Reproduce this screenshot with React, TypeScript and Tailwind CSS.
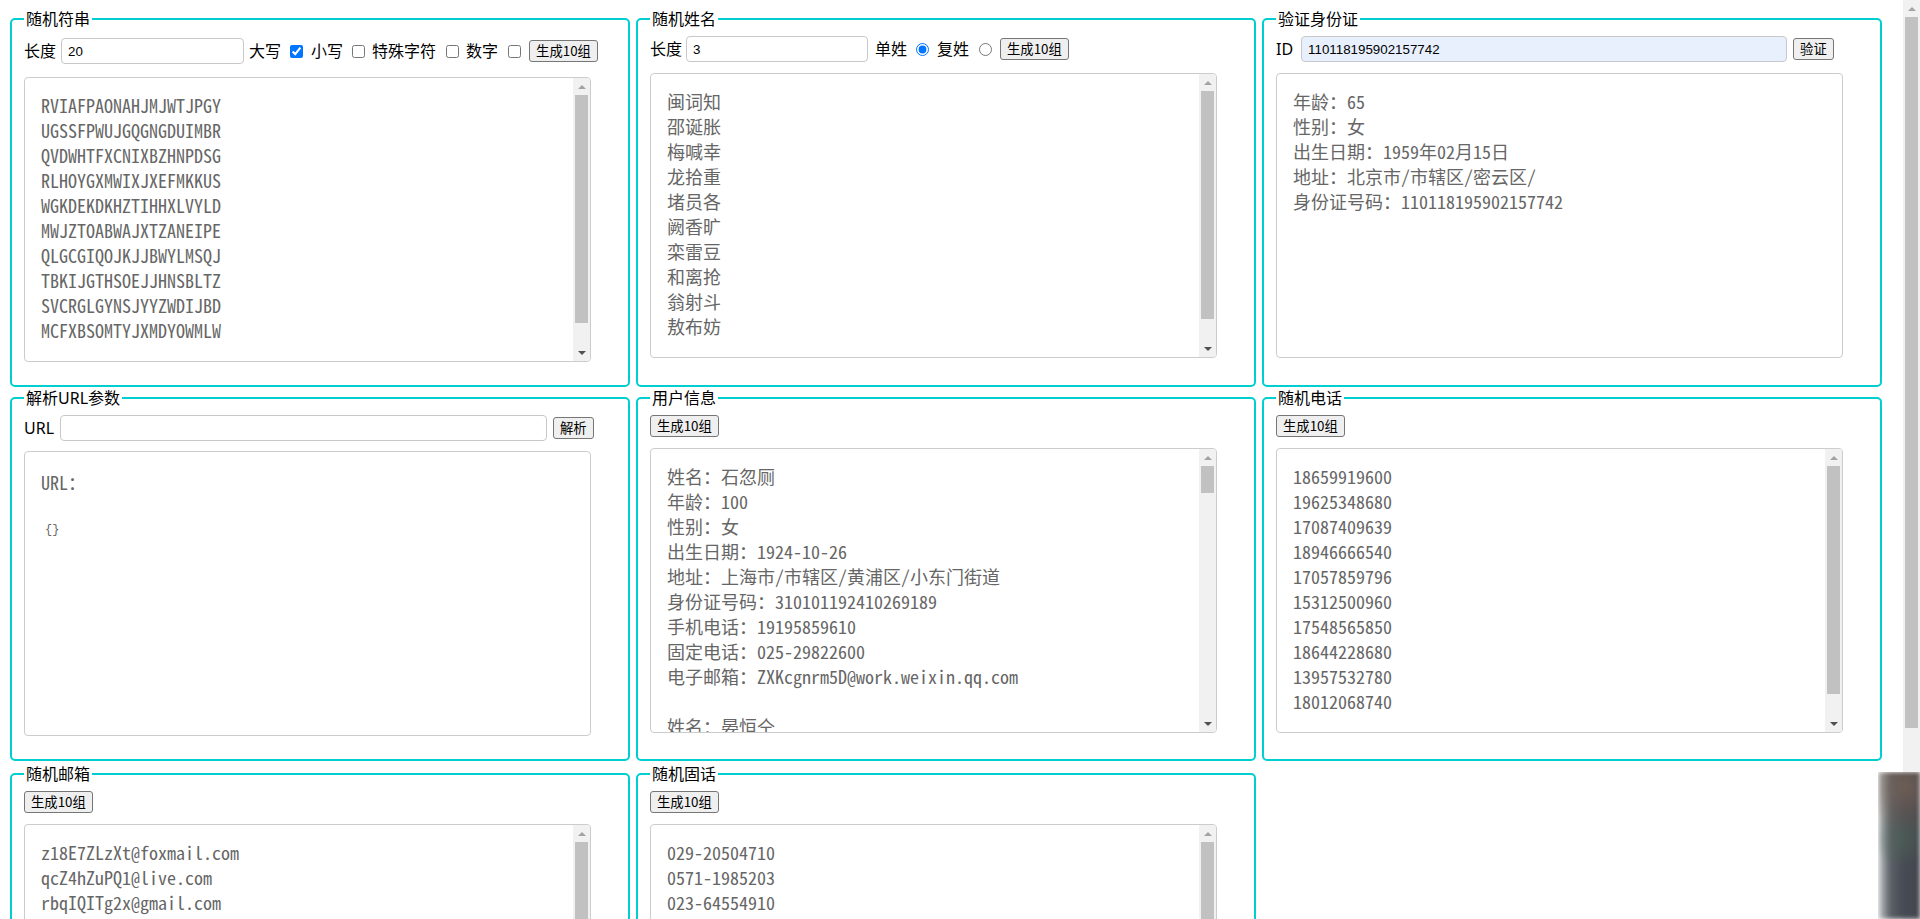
import React from "react";

const ui = "font-['Noto_Sans','Noto_Sans_CJK_SC',sans-serif]";
const btnFont = "font-['Noto_Sans_CJK_SC','Noto_Sans',sans-serif]";
const mono = "font-['Noto_Sans_Mono_CJK_SC','Liberation_Mono',monospace]";

const strings = [
  "RVIAFPAONAHJMJWTJPGY",
  "UGSSFPWUJGQGNGDUIMBR",
  "QVDWHTFXCNIXBZHNPDSG",
  "RLHOYGXMWIXJXEFMKKUS",
  "WGKDEKDKHZTIHHXLVYLD",
  "MWJZTOABWAJXTZANEIPE",
  "QLGCGIQOJKJJBWYLMSQJ",
  "TBKIJGTHSOEJJHNSBLTZ",
  "SVCRGLGYNSJYYZWDIJBD",
  "MCFXBSOMTYJXMDYOWMLW",
];

const names = ["闽词知", "邵诞胀", "梅喊幸", "龙拾重", "堵员各", "阙香旷", "栾雷豆", "和离抢", "翁射斗", "敖布妨"];

const idInfo = [
  "年龄：65",
  "性别：女",
  "出生日期：1959年02月15日",
  "地址：北京市/市辖区/密云区/",
  "身份证号码：110118195902157742",
];

const users = [
  ["石忽厕", "100", "女", "1924-10-26", "上海市/市辖区/黄浦区/小东门街道", "310101192410269189", "19195859610", "025-29822600", "ZXKcgnrm5D@work.weixin.qq.com"],
  ["晏恒仝", "37", "男", "1987-03-14", "浙江省/杭州市/西湖区/北山街道", "330106198703142715", "13857261904", "0571-8826341", "pQ7xLmTz2a@163.com"],
  ["柏淑闻", "52", "女", "1972-08-02", "广东省/广州市/天河区/石牌街道", "440106197208024426", "18620395517", "020-38419025", "Hk3vRw9QsE@qq.com"],
  ["戚岳纯", "28", "男", "1996-11-21", "四川省/成都市/武侯区/玉林街道", "510107199611213517", "17708231946", "028-85214760", "a8YtNbq4Lz@gmail.com"],
  ["谈秀琼", "64", "女", "1960-05-09", "江苏省/南京市/鼓楼区/宁海路街道", "320106196005096128", "15951724038", "025-83617402", "wE2uJk6PmR@foxmail.com"],
  ["董立昌", "45", "男", "1979-12-30", "湖北省/武汉市/江汉区/民族街道", "420103197912301839", "13971562284", "027-85731906", "Tz5qWn1XcB@live.com"],
  ["骆文娟", "33", "女", "1991-07-17", "山东省/济南市/历下区/泉城路街道", "370102199107176047", "18653107729", "0531-6829175", "mR4hGs8VyK@sina.com"],
  ["巫承德", "71", "男", "1953-02-25", "陕西省/西安市/碑林区/南院门街道", "610103195302252351", "13309184465", "029-87420316", "Lc9dFx3NpJ@126.com"],
  ["宁碧云", "19", "女", "2005-09-04", "福建省/厦门市/思明区/中华街道", "350203200509041862", "19859206371", "0592-2137845", "Bq6eVt2ZwH@outlook.com"],
  ["郝广森", "58", "男", "1966-04-12", "河南省/郑州市/金水区/经八路街道", "410105196604124575", "15837149902", "0371-6594228", "Yn1kPr7MsD@yahoo.com"],
];

const phones = ["18659919600", "19625348680", "17087409639", "18946666540", "17057859796", "15312500960", "17548565850", "18644228680", "13957532780", "18012068740"];

const emails = [
  "z18E7ZLzXt@foxmail.com",
  "qcZ4hZuPQ1@live.com",
  "rbqIQITg2x@gmail.com",
  "Kd8wNe3RtY@163.com",
  "pV5sJh1LqA@qq.com",
  "Xm2bGc7UzF@126.com",
  "tW9rQk4HnE@sina.com",
  "Jf6yDv8PsC@outlook.com",
  "nL3aZx5MwT@yahoo.com",
  "Ge7uBo2KiR@hotmail.com",
];

const landlines = ["029-20504710", "0571-1985203", "023-64554910", "010-58213467", "021-36920518", "0755-8264179", "027-41836052", "0531-9273146", "020-75318294", "0871-6402357"];

function Scrollbar({ thumbClass }: { thumbClass: string }) {
  return (
    <div className="w-[17px] shrink-0 h-full bg-[#f1f1f1] flex flex-col">
      <div className="h-[17px] shrink-0 flex items-center justify-center">
        <span className="w-0 h-0 border-x-[4px] border-x-transparent border-b-[4px] border-b-[#a3a3a3]" />
      </div>
      <div className="flex-1 min-h-0 px-[2px]">
        <div className={`w-full bg-[#c1c1c1] ${thumbClass}`} />
      </div>
      <div className="h-[17px] shrink-0 flex items-center justify-center">
        <span className="w-0 h-0 border-x-[4px] border-x-transparent border-t-[4px] border-t-[#505050]" />
      </div>
    </div>
  );
}

function Fieldset({ title, className, children }: { title: string; className: string; children: React.ReactNode }) {
  return (
    <fieldset className={`w-[620px] shrink-0 border-2 border-solid border-[#00cfd1] rounded-[5px] px-3 pt-[6px] ${className}`}>
      <legend className={`px-[2px] text-[16px] leading-[22px] text-black ${ui}`}>{title}</legend>
      {children}
    </fieldset>
  );
}

function Btn({ children, className = "" }: { children: React.ReactNode; className?: string }) {
  return (
    <button
      className={`h-[22px] px-[6px] bg-[#efefef] border border-solid border-[#767676] rounded-[3px] text-[13.33px] leading-[18px] text-black whitespace-nowrap ${btnFont} ${className}`}
    >
      {children}
    </button>
  );
}

function TextInput({ value, className }: { value: string; className: string }) {
  return (
    <input
      type="text"
      defaultValue={value}
      className={`h-[26px] border border-solid border-[#c8c8c8] rounded-[4px] px-[6px] text-[13.33px] text-black font-['Liberation_Sans',Arial,sans-serif] outline-none ${className}`}
    />
  );
}

function Box({ children, className = "", thumbClass }: { children: React.ReactNode; className?: string; thumbClass?: string }) {
  return (
    <div className={`w-[567px] h-[285px] border border-solid border-[#cccccc] rounded-[4px] overflow-hidden flex ${className}`}>
      <div className="flex-1 min-w-0 overflow-hidden">
        <div className={`pt-[15px] pl-[16px] text-[18px] leading-[25px] text-[#666666] whitespace-pre ${mono}`}>{children}</div>
      </div>
      {thumbClass ? <Scrollbar thumbClass={thumbClass} /> : null}
    </div>
  );
}

function Lines({ items }: { items: string[] }) {
  return (
    <>
      {items.map((s, i) => (
        <div key={i} className="h-[25px]">
          {s}
        </div>
      ))}
    </>
  );
}

export default function App() {
  const userLines: string[] = [];
  users.forEach((u) => {
    userLines.push(
      `姓名：${u[0]}`,
      `年龄：${u[1]}`,
      `性别：${u[2]}`,
      `出生日期：${u[3]}`,
      `地址：${u[4]}`,
      `身份证号码：${u[5]}`,
      `手机电话：${u[6]}`,
      `固定电话：${u[7]}`,
      `电子邮箱：${u[8]}`,
      ""
    );
  });

  return (
    <div className={`h-[919px] w-full overflow-hidden bg-white flex ${ui}`}>
      <div className="flex-1 min-w-0 h-full overflow-hidden">
        <div className="pt-[8px] pl-[10px] pb-[8px] flex flex-col">
          {/* Row 1 */}
          <div className="flex gap-[6px]">
            <Fieldset title="随机符串" className="h-[379px]">
              <div className="flex items-center h-[26px] mt-[2px] text-[16px] text-black whitespace-nowrap">
                <span>长度</span>
                <TextInput value="20" className="w-[183px] ml-[5px]" />
                <span className="ml-[5px]">大写</span>
                <input type="checkbox" defaultChecked className="w-[13px] h-[13px] ml-[9px]" />
                <span className="ml-[8px]">小写</span>
                <input type="checkbox" className="w-[13px] h-[13px] ml-[9px]" />
                <span className="ml-[7px]">特殊字符</span>
                <input type="checkbox" className="w-[13px] h-[13px] ml-[10px]" />
                <span className="ml-[7px]">数字</span>
                <input type="checkbox" className="w-[13px] h-[13px] ml-[10px]" />
                <Btn className="ml-[8px]">生成10组</Btn>
              </div>
              <Box className="mt-[13px]" thumbClass="h-[228px]">
                <Lines items={strings} />
              </Box>
            </Fieldset>

            <Fieldset title="随机姓名" className="h-[379px]">
              <div className="flex items-center h-[26px] text-[16px] text-black whitespace-nowrap">
                <span>长度</span>
                <TextInput value="3" className="w-[182px] ml-[4px]" />
                <span className="ml-[7px]">单姓</span>
                <input type="radio" name="surname" defaultChecked className="w-[13px] h-[13px] ml-[9px]" />
                <span className="ml-[8px]">复姓</span>
                <input type="radio" name="surname" className="w-[13px] h-[13px] ml-[10px]" />
                <Btn className="ml-[8px]">生成10组</Btn>
              </div>
              <Box className="mt-[11px]" thumbClass="h-[228px]">
                <Lines items={names} />
              </Box>
            </Fieldset>

            <Fieldset title="验证身份证" className="h-[379px]">
              <div className="flex items-center h-[26px] text-[16px] text-black whitespace-nowrap">
                <span>ID</span>
                <TextInput value="110118195902157742" className="w-[486px] ml-[8px] bg-[#e8f0fe]" />
                <Btn className="ml-[6px]">验证</Btn>
              </div>
              <Box className="mt-[11px]">
                <Lines items={idInfo} />
              </Box>
            </Fieldset>
          </div>

          {/* Row 2 */}
          <div className="flex gap-[6px]">
            <Fieldset title="解析URL参数" className="h-[374px]">
              <div className="flex items-center h-[26px] text-[16px] text-black whitespace-nowrap">
                <span>URL</span>
                <TextInput value="" className="w-[487px] ml-[6px]" />
                <Btn className="ml-[6px]">解析</Btn>
              </div>
              <div className="mt-[10px] w-[567px] h-[285px] border border-solid border-[#cccccc] rounded-[4px] overflow-hidden">
                <div className={`pt-[18px] pl-[16px] text-[18px] leading-[25px] text-[#666666] ${mono}`}>URL：</div>
                <div className="mt-[26px] pl-[20px] text-[12px] leading-[18px] text-[#666666] font-['Liberation_Mono',monospace]">{"{}"}</div>
              </div>
            </Fieldset>

            <Fieldset title="用户信息" className="h-[374px]">
              <Btn className="block">生成10组</Btn>
              <Box className="mt-[11px]" thumbClass="h-[27px]">
                <Lines items={userLines} />
              </Box>
            </Fieldset>

            <Fieldset title="随机电话" className="h-[374px]">
              <Btn className="block">生成10组</Btn>
              <Box className="mt-[11px]" thumbClass="h-[228px]">
                <Lines items={phones} />
              </Box>
            </Fieldset>
          </div>

          {/* Row 3 */}
          <div className="flex gap-[6px] mt-[2px]">
            <Fieldset title="随机邮箱" className="h-[374px]">
              <Btn className="block">生成10组</Btn>
              <Box className="mt-[11px]" thumbClass="h-[228px]">
                <Lines items={emails} />
              </Box>
            </Fieldset>

            <Fieldset title="随机固话" className="h-[374px]">
              <Btn className="block">生成10组</Btn>
              <Box className="mt-[11px]" thumbClass="h-[228px]">
                <Lines items={landlines} />
              </Box>
            </Fieldset>
          </div>
        </div>
      </div>

      {/* page scrollbar */}
      <Scrollbar thumbClass="h-[711px]" />

      {/* blurred floating widget in the bottom-right corner */}
      <div className="fixed left-[1878px] top-[772px] w-[42px] h-[147px] overflow-hidden">
        <div className="w-full h-full blur-[2px] bg-[radial-gradient(circle_at_65%_10%,rgba(125,100,85,0.7),transparent_35%),radial-gradient(circle_at_55%_45%,rgba(80,105,88,0.55),transparent_35%),linear-gradient(to_right,#d5d9d9_0%,#9ba0a3_12%,#5b5f66_30%,#474b53_60%,#43464d_100%)]" />
      </div>
    </div>
  );
}
